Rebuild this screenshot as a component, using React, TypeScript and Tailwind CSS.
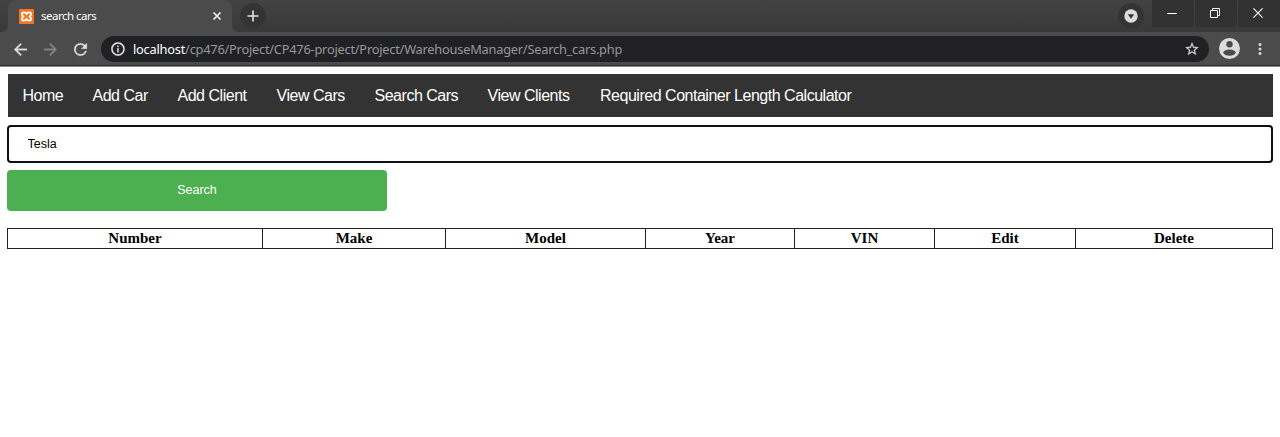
import React from "react";

const links = [
  { label: "Home", width: "w-[70px]" },
  { label: "Add Car", width: "w-[85px]" },
  { label: "Add Client", width: "w-[99px]" },
  { label: "View Cars", width: "w-[98px]" },
  { label: "Search Cars", width: "w-[113px]" },
  { label: "View Clients", width: "w-[112.5px]" },
  { label: "Required Container Length Calculator", width: "w-[282px]" },
];

const columns = [
  { label: "Number", width: "w-[255px]" },
  { label: "Make", width: "w-[183px]" },
  { label: "Model", width: "w-[200px]" },
  { label: "Year", width: "w-[149px]" },
  { label: "VIN", width: "w-[140px]" },
  { label: "Edit", width: "w-[141px]" },
  { label: "Delete", width: "w-[197px]" },
];

function Favicon() {
  return (
    <svg className="ml-[11px] shrink-0" width="15" height="15" viewBox="0 0 15 15">
      <rect width="15" height="15" rx="1" fill="#f37623" />
      <path
        d="M7.500 5.200Q6.800 3.400 4.900 3.400 3 3.400 3 5.200 3 6.600 4.500 7.500 3 8.400 3 9.800 3 11.600 4.900 11.600 6.800 11.600 7.500 9.800 8.200 11.600 10.100 11.600 12 11.600 12 9.800 12 8.400 10.500 7.500 12 6.600 12 5.200 12 3.400 10.100 3.400 8.200 3.400 7.500 5.200Z"
        fill="none"
        stroke="#fff"
        strokeWidth="1.900"
        strokeLinejoin="round"
      />
    </svg>
  );
}

function TabStrip() {
  return (
    <div className="flex h-8 items-start bg-linear-to-b from-[#434343] to-[#393939]">
      <div className="flex h-8 w-2 items-end bg-[#4b4b4b]">
        <div className="h-8 w-2 rounded-br-[7px] bg-linear-to-b from-[#434343] to-[#393939]" />
      </div>
      <div className="bg-[#414141]">
        <div className="flex h-8 w-[224px] items-center rounded-t-[7px] bg-[#4b4b4b]">
          <Favicon />
          <span className="ml-[7px] w-[171px] whitespace-nowrap text-[11.5px] leading-4 tracking-[-0.5px] text-white">search cars</span>
          <svg className="shrink-0" width="10" height="10" viewBox="0 0 10 10" stroke="#efefef" strokeWidth="1.7">
            <path d="M1.500 1.500l7 7M8.500 1.500l-7 7" />
          </svg>
        </div>
      </div>
      <div className="flex h-8 w-2 bg-[#4b4b4b]">
        <div className="h-8 w-2 rounded-bl-[7px] bg-linear-to-b from-[#434343] to-[#393939]" />
      </div>
      <div className="mt-[3px] flex size-[26px] items-center justify-center rounded-full bg-[#343434]">
        <svg width="12" height="12" viewBox="0 0 12 12" stroke="#dedede" strokeWidth="1.7">
          <path d="M6 .5v11M.5 6h11" />
        </svg>
      </div>
      <div className="mt-[3px] ml-auto flex size-[26px] items-center justify-center rounded-full bg-[#343434]">
        <svg width="14" height="14" viewBox="0 0 14 14">
          <circle cx="7" cy="7" r="6.700" fill="#dcdcdc" />
          <path d="M3.800 5.300h6.400L7 9.700Z" fill="#333" />
        </svg>
      </div>
      <div className="ml-2 flex h-[27px] w-32 gap-px">
        <div className="flex w-[42px] items-center justify-center bg-[#323232]">
          <svg className="mr-[2px]" width="10" height="9" viewBox="0 0 10 9"><path d="M.3 4.500h9.400" stroke="#fff" /></svg>
        </div>
        <div className="flex w-[42px] items-center justify-center bg-[#323232]">
          <svg className="mr-[2px] mb-px" width="10" height="10" viewBox="0 0 10 10" fill="none" stroke="#f2f2f2">
            <path d="M.5 2.500h7v7h-7ZM2.500 2.500v-2h7v7h-2" />
          </svg>
        </div>
        <div className="flex w-[42px] items-center justify-center bg-[#323232]">
          <svg className="mr-[2px] mb-px" width="10" height="10" viewBox="0 0 10 10" stroke="#f4f4f4" strokeWidth="1.200"><path d="M.4.4l9.200 9.200M9.600.4L.4 9.600" /></svg>
        </div>
      </div>
    </div>
  );
}

function Toolbar() {
  return (
    <div className="flex h-[35px] items-center border-b border-[#888] bg-[#4b4b4b] shadow-[inset_0_-1px_0_#303030]">
      <svg className="ml-[11px] shrink-0" width="19" height="19" viewBox="0 0 24 24" fill="#dedede" stroke="#dedede" strokeWidth=".4">
        <path d="M20 11H7.830l5.590-5.590L12 4l-8 8 8 8 1.410-1.410L7.830 13H20v-2z" />
      </svg>
      <svg className="ml-[11px] shrink-0" width="19" height="19" viewBox="0 0 24 24" fill="#858585" stroke="#858585" strokeWidth=".4">
        <path d="M12 4l-1.410 1.410L16.170 11H4v2h12.170l-5.580 5.590L12 20l8-8z" />
      </svg>
      <svg className="ml-[11px] shrink-0" width="19" height="19" viewBox="0 0 24 24" fill="#dedede" stroke="#dedede" strokeWidth=".4">
        <path d="M17.650 6.350A7.960 7.960 0 0 0 12 4a8 8 0 1 0 7.730 10h-2.080A6 6 0 1 1 12 6c1.660 0 3.140.69 4.220 1.780L13 11h7V4z" />
      </svg>
      <div className="ml-[11px] flex h-[26px] w-[1108px] items-center rounded-full bg-[#202124]">
        <svg className="ml-[9px] shrink-0" width="16" height="16" viewBox="0 0 24 24" fill="#e6e6e6" stroke="#e6e6e6" strokeWidth=".4">
          <path d="M11 7h2v2h-2zm0 4h2v6h-2zm1-9C6.480 2 2 6.480 2 12s4.480 10 10 10 10-4.480 10-10S17.520 2 12 2zm0 18c-4.410 0-8-3.590-8-8s3.590-8 8-8 8 3.590 8 8-3.590 8-8 8z" />
        </svg>
        <span className="ml-[7px] whitespace-nowrap text-[12.8px] leading-5 tracking-[-0.22px] text-[#989898]">
          <span className="text-white">localhost</span>/cp476/Project/CP476-project/Project/WarehouseManager/Search_cars.php
        </span>
        <svg className="mr-[9px] ml-auto shrink-0" width="16" height="16" viewBox="0 0 24 24" fill="#d5d5d5" stroke="#d5d5d5" strokeWidth=".3">
          <path d="M22 9.240l-7.190-.62L12 2 9.190 8.630 2 9.240l5.460 4.730L5.820 21 12 17.270 18.180 21l-1.630-7.030L22 9.240zM12 15.400l-3.760 2.270 1-4.280-3.320-2.880 4.380-.38L12 6.100l1.710 4.040 4.380.38-3.320 2.880 1 4.280L12 15.400z" />
        </svg>
      </div>
      <svg className="mb-px ml-[10px] shrink-0" width="21" height="21" viewBox="0 0 21 21">
        <circle cx="10.500" cy="10.500" r="10.500" fill="#dcdcdc" />
        <circle cx="10.500" cy="6.300" r="3.200" fill="#4b4b4b" />
        <ellipse cx="10.500" cy="14.600" rx="6.200" ry="3.100" fill="#4b4b4b" />
      </svg>
      <svg className="ml-[18px] shrink-0" width="4" height="14" viewBox="0 0 4 14" fill="#d9d9d9">
        <circle cx="2" cy="2.500" r="1.500" />
        <circle cx="2" cy="7" r="1.500" />
        <circle cx="2" cy="11.500" r="1.500" />
      </svg>
    </div>
  );
}

export default function App() {
  return (
    <div className="h-[437px] w-[1280px] overflow-hidden bg-white">
      <header className="font-['Noto_Sans',sans-serif]">
        <TabStrip />
        <Toolbar />
      </header>
      <main className="pt-[7px] pr-[7px] pl-[7px] font-['Liberation_Sans',sans-serif]">
        <nav className="ml-px flex h-[43px] w-[1265px] items-center bg-[#333] text-base tracking-[-0.48px] text-white">
          {links.map((l) => (
            <a key={l.label} className={`${l.width} shrink-0 pl-[14.5px] whitespace-nowrap`}>{l.label}</a>
          ))}
        </nav>
        <input
          className="mt-2 block h-[38px] w-full rounded-[4px] border-2 border-[#101010] bg-white pl-[18.5px] text-[12.5px] text-black outline-none"
          defaultValue="Tesla"
        />
        <button className="mt-[7px] block h-[41px] w-[380px] rounded-[4px] bg-[#4caf50] text-[12.5px] text-white">Search</button>
        <table className="mt-[17px] w-[1265px] table-fixed border-collapse font-['Liberation_Serif',serif] text-[15px] text-black">
          <thead>
            <tr>
              {columns.map((c) => (
                <th key={c.label} className={`${c.width} h-5 border border-[#222] p-0 text-center leading-[19px] font-bold`}>{c.label}</th>
              ))}
            </tr>
          </thead>
        </table>
      </main>
    </div>
  );
}
